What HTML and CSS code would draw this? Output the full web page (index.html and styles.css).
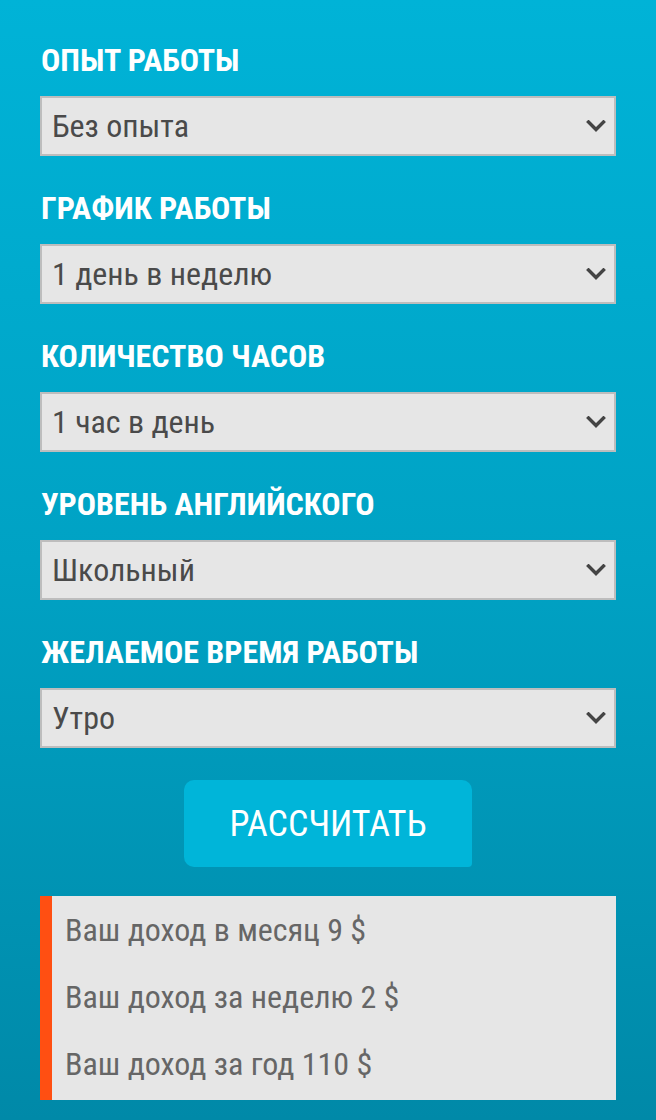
FILE: index.html
```html
<!DOCTYPE html>
<html lang="ru">
<head>
<meta charset="utf-8">
<link rel="stylesheet" href="styles.css">
</head>
<body>
<main class="calc">
  <section class="field">
    <h2 class="label">Опыт работы</h2>
    <div class="select-wrap">
      <select class="select"><option>Без опыта</option></select>
      <svg class="chevron" viewBox="0 0 20 12" width="20" height="12"><path d="M2.5 2 L10 9.5 L17.5 2" fill="none" stroke="#444" stroke-width="3.4" stroke-linecap="square"/></svg>
    </div>
  </section>
  <section class="field">
    <h2 class="label">График работы</h2>
    <div class="select-wrap">
      <select class="select"><option>1 день в неделю</option></select>
      <svg class="chevron" viewBox="0 0 20 12" width="20" height="12"><path d="M2.5 2 L10 9.5 L17.5 2" fill="none" stroke="#444" stroke-width="3.4" stroke-linecap="square"/></svg>
    </div>
  </section>
  <section class="field">
    <h2 class="label">Количество часов</h2>
    <div class="select-wrap">
      <select class="select"><option>1 час в день</option></select>
      <svg class="chevron" viewBox="0 0 20 12" width="20" height="12"><path d="M2.5 2 L10 9.5 L17.5 2" fill="none" stroke="#444" stroke-width="3.4" stroke-linecap="square"/></svg>
    </div>
  </section>
  <section class="field">
    <h2 class="label">Уровень английского</h2>
    <div class="select-wrap">
      <select class="select"><option>Школьный</option></select>
      <svg class="chevron" viewBox="0 0 20 12" width="20" height="12"><path d="M2.5 2 L10 9.5 L17.5 2" fill="none" stroke="#444" stroke-width="3.4" stroke-linecap="square"/></svg>
    </div>
  </section>
  <section class="field">
    <h2 class="label">Желаемое время работы</h2>
    <div class="select-wrap">
      <select class="select"><option>Утро</option></select>
      <svg class="chevron" viewBox="0 0 20 12" width="20" height="12"><path d="M2.5 2 L10 9.5 L17.5 2" fill="none" stroke="#444" stroke-width="3.4" stroke-linecap="square"/></svg>
    </div>
  </section>
  <div class="actions">
    <button class="btn" type="button">РАССЧИТАТЬ</button>
  </div>
  <div class="result">
    <p class="result-line">Ваш доход в месяц 9 $</p>
    <p class="result-line">Ваш доход за неделю 2 $</p>
    <p class="result-line">Ваш доход за год 110 $</p>
  </div>
</main>
</body>
</html>
```
FILE: styles.css
```css
html, body {
  margin: 0;
  padding: 0;
}
body {
  width: 656px;
  height: 1120px;
  overflow: hidden;
  background: linear-gradient(to bottom, #00b3d7 0%, #00a2c4 50%, #0089a8 100%);
  font-family: "Roboto Condensed", "Roboto", "Liberation Sans", sans-serif;
}
.calc {
  padding: 40px 40px 0 40px;
  display: flex;
  flex-direction: column;
}
.field {
  display: flex;
  flex-direction: column;
  margin-bottom: 32px;
}
.label {
  margin: 0 0 16px 1px;
  color: #fff;
  font-size: 32px;
  font-weight: 700;
  line-height: 40px;
  text-transform: uppercase;
}
.select-wrap {
  position: relative;
}
.select {
  -webkit-appearance: none;
  appearance: none;
  width: 100%;
  height: 60px;
  box-sizing: border-box;
  border: 2px solid #bdbdbd;
  border-radius: 0;
  background: #e6e6e6;
  color: #4a4a4a;
  font-family: inherit;
  font-size: 32px;
  padding: 0 50px 0 10px;
  outline: none;
}
.chevron {
  position: absolute;
  right: 10px;
  top: 24px;
  pointer-events: none;
}
.actions {
  display: flex;
  justify-content: center;
}
.btn {
  width: 288px;
  height: 87px;
  border: none;
  border-radius: 10px 10px 4px 10px;
  background: #00b5d9;
  color: #fff;
  font-family: inherit;
  font-size: 36px;
  font-weight: 400;
}
.result {
  margin-top: 29px;
  background: #e6e6e6;
  border-left: 12px solid #ff4f12;
  padding: 1px 0 2px 13px;
}
.result-line {
  margin: 0;
  color: #666;
  font-size: 32px;
  line-height: 67px;
}
```
